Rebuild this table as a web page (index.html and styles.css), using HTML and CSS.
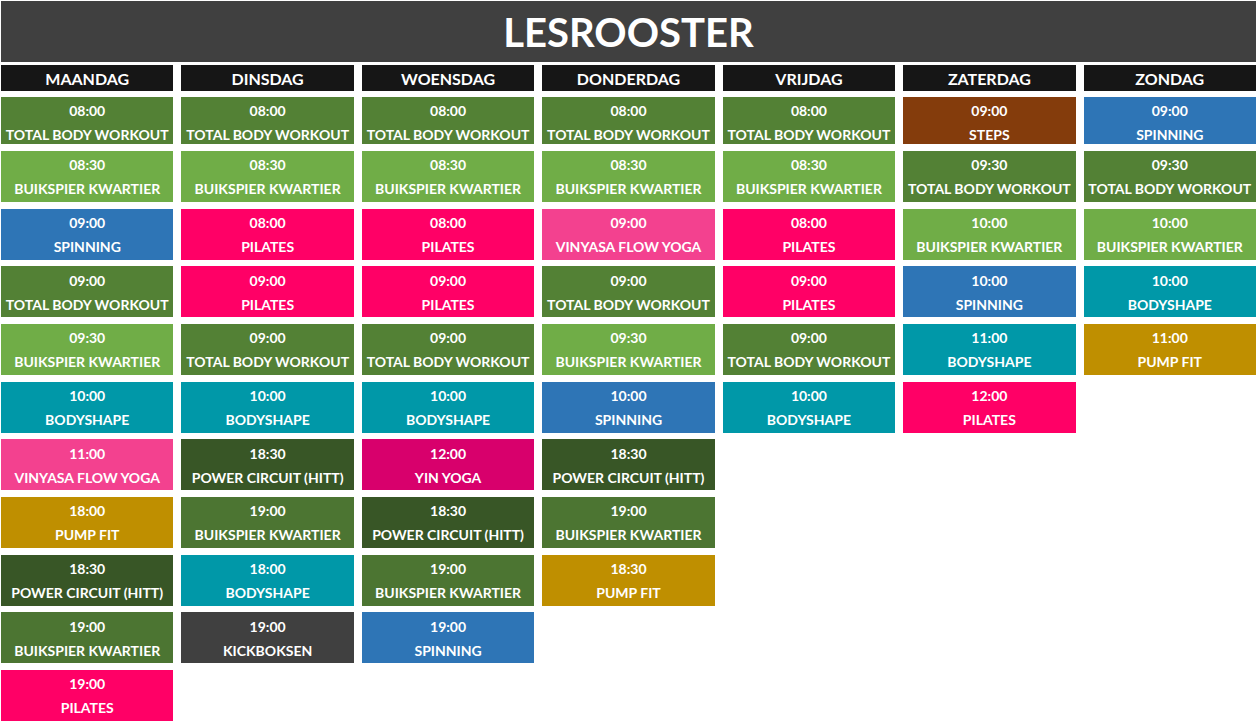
FILE: index.html
```html
<!DOCTYPE html>
<html lang="nl">
<head>
<meta charset="utf-8">
<title>Lesrooster</title>
<link rel="stylesheet" href="styles.css">
</head>
<body>
<div class="page">
  <header class="title">LESROOSTER</header>
  <div class="board">
    <section class="day">
      <div class="day-head">MAANDAG</div>
      <div class="slot c-dg"><span>08:00</span><span>TOTAL BODY WORKOUT</span></div>
      <div class="slot c-lg"><span>08:30</span><span>BUIKSPIER KWARTIER</span></div>
      <div class="slot c-blue"><span>09:00</span><span>SPINNING</span></div>
      <div class="slot c-dg"><span>09:00</span><span>TOTAL BODY WORKOUT</span></div>
      <div class="slot c-lg"><span>09:30</span><span>BUIKSPIER KWARTIER</span></div>
      <div class="slot c-teal"><span>10:00</span><span>BODYSHAPE</span></div>
      <div class="slot c-vin"><span>11:00</span><span>VINYASA FLOW YOGA</span></div>
      <div class="slot c-gold"><span>18:00</span><span>PUMP FIT</span></div>
      <div class="slot c-olive"><span>18:30</span><span>POWER CIRCUIT (HITT)</span></div>
      <div class="slot c-mg"><span>19:00</span><span>BUIKSPIER KWARTIER</span></div>
      <div class="slot c-pink"><span>19:00</span><span>PILATES</span></div>
    </section>
    <section class="day">
      <div class="day-head">DINSDAG</div>
      <div class="slot c-dg"><span>08:00</span><span>TOTAL BODY WORKOUT</span></div>
      <div class="slot c-lg"><span>08:30</span><span>BUIKSPIER KWARTIER</span></div>
      <div class="slot c-pink"><span>08:00</span><span>PILATES</span></div>
      <div class="slot c-pink"><span>09:00</span><span>PILATES</span></div>
      <div class="slot c-dg"><span>09:00</span><span>TOTAL BODY WORKOUT</span></div>
      <div class="slot c-teal"><span>10:00</span><span>BODYSHAPE</span></div>
      <div class="slot c-olive"><span>18:30</span><span>POWER CIRCUIT (HITT)</span></div>
      <div class="slot c-mg"><span>19:00</span><span>BUIKSPIER KWARTIER</span></div>
      <div class="slot c-teal"><span>18:00</span><span>BODYSHAPE</span></div>
      <div class="slot c-gray"><span>19:00</span><span>KICKBOKSEN</span></div>
    </section>
    <section class="day">
      <div class="day-head">WOENSDAG</div>
      <div class="slot c-dg"><span>08:00</span><span>TOTAL BODY WORKOUT</span></div>
      <div class="slot c-lg"><span>08:30</span><span>BUIKSPIER KWARTIER</span></div>
      <div class="slot c-pink"><span>08:00</span><span>PILATES</span></div>
      <div class="slot c-pink"><span>09:00</span><span>PILATES</span></div>
      <div class="slot c-dg"><span>09:00</span><span>TOTAL BODY WORKOUT</span></div>
      <div class="slot c-teal"><span>10:00</span><span>BODYSHAPE</span></div>
      <div class="slot c-yin"><span>12:00</span><span>YIN YOGA</span></div>
      <div class="slot c-olive"><span>18:30</span><span>POWER CIRCUIT (HITT)</span></div>
      <div class="slot c-mg"><span>19:00</span><span>BUIKSPIER KWARTIER</span></div>
      <div class="slot c-blue"><span>19:00</span><span>SPINNING</span></div>
    </section>
    <section class="day">
      <div class="day-head">DONDERDAG</div>
      <div class="slot c-dg"><span>08:00</span><span>TOTAL BODY WORKOUT</span></div>
      <div class="slot c-lg"><span>08:30</span><span>BUIKSPIER KWARTIER</span></div>
      <div class="slot c-vin"><span>09:00</span><span>VINYASA FLOW YOGA</span></div>
      <div class="slot c-dg"><span>09:00</span><span>TOTAL BODY WORKOUT</span></div>
      <div class="slot c-lg"><span>09:30</span><span>BUIKSPIER KWARTIER</span></div>
      <div class="slot c-blue"><span>10:00</span><span>SPINNING</span></div>
      <div class="slot c-olive"><span>18:30</span><span>POWER CIRCUIT (HITT)</span></div>
      <div class="slot c-mg"><span>19:00</span><span>BUIKSPIER KWARTIER</span></div>
      <div class="slot c-gold"><span>18:30</span><span>PUMP FIT</span></div>
    </section>
    <section class="day">
      <div class="day-head">VRIJDAG</div>
      <div class="slot c-dg"><span>08:00</span><span>TOTAL BODY WORKOUT</span></div>
      <div class="slot c-lg"><span>08:30</span><span>BUIKSPIER KWARTIER</span></div>
      <div class="slot c-pink"><span>08:00</span><span>PILATES</span></div>
      <div class="slot c-pink"><span>09:00</span><span>PILATES</span></div>
      <div class="slot c-dg"><span>09:00</span><span>TOTAL BODY WORKOUT</span></div>
      <div class="slot c-teal"><span>10:00</span><span>BODYSHAPE</span></div>
    </section>
    <section class="day">
      <div class="day-head">ZATERDAG</div>
      <div class="slot c-brown"><span>09:00</span><span>STEPS</span></div>
      <div class="slot c-dg"><span>09:30</span><span>TOTAL BODY WORKOUT</span></div>
      <div class="slot c-lg"><span>10:00</span><span>BUIKSPIER KWARTIER</span></div>
      <div class="slot c-blue"><span>10:00</span><span>SPINNING</span></div>
      <div class="slot c-teal"><span>11:00</span><span>BODYSHAPE</span></div>
      <div class="slot c-pink"><span>12:00</span><span>PILATES</span></div>
    </section>
    <section class="day">
      <div class="day-head">ZONDAG</div>
      <div class="slot c-blue"><span>09:00</span><span>SPINNING</span></div>
      <div class="slot c-dg"><span>09:30</span><span>TOTAL BODY WORKOUT</span></div>
      <div class="slot c-lg"><span>10:00</span><span>BUIKSPIER KWARTIER</span></div>
      <div class="slot c-teal"><span>10:00</span><span>BODYSHAPE</span></div>
      <div class="slot c-gold"><span>11:00</span><span>PUMP FIT</span></div>
    </section>
  </div>
</div>
</body>
</html>
```

FILE: styles.css
```css
* { box-sizing: border-box; }

html, body {
  margin: 0;
  padding: 0;
  background: #ffffff;
}

body {
  font-family: Lato, "Open Sans", "Liberation Sans", sans-serif;
  font-weight: 700;
  color: #ffffff;
}

.page {
  padding: 1px 1px 0 1px;
  width: 1257px;
  height: 722px;
  overflow: hidden;
}

.title {
  height: 61px;
  background: #404040;
  display: flex;
  align-items: center;
  justify-content: center;
  font-size: 40px;
  line-height: 1;
  padding-top: 1px;
}

.board {
  margin-top: 3px;
  display: grid;
  grid-template-columns: repeat(7, 1fr);
  column-gap: 8px;
  align-items: start;
}

.day {
  display: flex;
  flex-direction: column;
  gap: 6.67px;
}

.day-head {
  height: 26px;
  background: #161616;
  display: flex;
  align-items: center;
  justify-content: center;
  font-size: 16px;
  margin-bottom: -0.67px;
}

.slot {
  height: 51px;
  display: flex;
  flex-direction: column;
  align-items: center;
  padding-top: 2.5px;
  font-size: 14px;
  line-height: 24px;
  white-space: nowrap;
}

.day-head + .slot {
  height: 47px;
  padding-top: 1.5px;
  margin-bottom: 0.33px;
}

.c-dg { background: #538135; }
.c-lg { background: #70ad47; }
.c-blue { background: #2e75b6; }
.c-pink { background: #ff0066; }
.c-teal { background: #0098a8; }
.c-vin { background: #f3418f; }
.c-yin { background: #d8006c; }
.c-olive { background: #385626; }
.c-mg { background: #4c7532; }
.c-gold { background: #bf8f00; }
.c-brown { background: #843c0c; }
.c-gray { background: #404040; }
```
